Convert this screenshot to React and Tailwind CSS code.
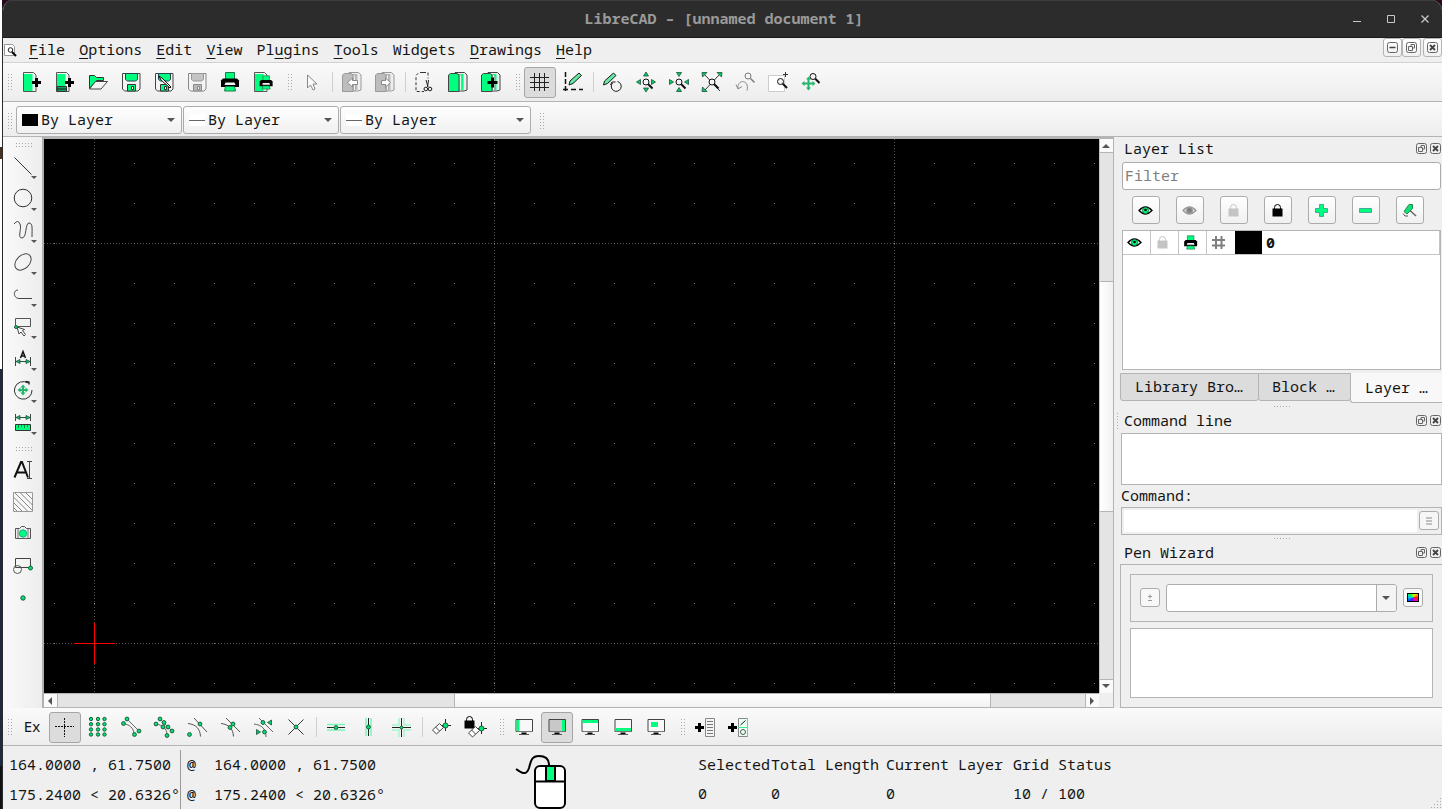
import clsx from 'clsx';

const G = '#00ff7f';
const K = '#1c1c1c';

const Svg = ({ children, w = 24, h = 24, className }) => (
  <svg width={w} height={h} viewBox={`0 0 ${w} ${h}`} fill="none" stroke={K} strokeWidth="1" className={clsx('shrink-0', className)}>
    {children}
  </svg>
);

const Dot = ({ x, y, r = 1.9 }) => <circle cx={x} cy={y} r={r} fill="#00e676" stroke="#1d5c3b" strokeWidth="1" />;
const Plus = ({ x, y, s = 4.5 }) => <path d={`M${x - s} ${y}h${s * 2}M${x} ${y - s}v${s * 2}`} stroke="#000" strokeWidth="3" />;

// magnifier used by all of the zoom actions, centred on its lens
const Lens = ({ x, y, c = '#111' }) => (
  <>
    <circle cx={x} cy={y} r="3" fill="#f4f4f4" stroke={c} />
    <path d={`M${x + 2.3} ${y + 2.3}l4.2 4.2`} stroke={c} strokeWidth="2" />
  </>
);

const Page = () => (
  <>
    <path d="M3.500 2.500h10l2.500 2.500v16.500h-12.500z" fill="#f4f4f4" stroke="#555" />
    <path d="M4 4h8.500v17h-8.500z" fill={G} stroke="none" />
  </>
);

const Floppy = ({ off }) => (
  <>
    <path d="M3.500 3.500h17.500v15.500l-2 2h-13.500l-2-2z" fill="#f4f4f4" stroke={off ? '#888' : '#444'} />
    <path d="M6.500 3.500h12v6l-2 1.500h-8l-2-1.500z" fill={off ? '#c4c4c4' : G} stroke={off ? '#999' : '#245'} />
    <path d="M8.500 21v-6.500h8v6.500z" fill={off ? '#b8b8b8' : G} stroke={off ? '#888' : '#333'} />
    <path d="M12.500 16.500h2v3h-2z" fill="#f4f4f4" stroke={off ? '#888' : '#333'} />
  </>
);

const Printer = ({ x = 0, y = 0, s = 1 }) => (
  <g transform={`translate(${x} ${y}) scale(${s})`}>
    <path d="M7.500 2.500h9v7h-9z" fill={G} stroke="#1b7a4a" />
    <path d="M5 8.500h14l2 2v6.500h-18v-6.500z" fill="#000" stroke="none" />
    <path d="M7.500 12.500h9l1 2.500h-11z" fill="#f4f4f4" stroke="none" />
    <path d="M7.500 16.500h9l1 4.500h-11z" fill={G} stroke="#1b7a4a" />
  </g>
);

const Blocks = ({ off }) => (
  <>
    <path d="M9 2.500h9.500l2.500 2.500v15l-3 1h-9z" fill="#eee" stroke={off ? '#999' : '#444'} />
    <path d="M12 4h5.500v16h-5.500z" fill={off ? '#bdbdbd' : G} stroke="none" />
    <path d="M13 4.500h1.500l1 2v14h-2z" fill="#eee" stroke="#999" strokeWidth=".6" />
    <path d="M2.500 5l2-1.500h6.500l2 1.500v16.500h-10.500z" fill={off ? '#bdbdbd' : G} stroke={off ? '#999' : '#444'} />
  </>
);

const Pencil = ({ x = 0, y = 0, c = K }) => (
  <path d={`M${x + 4} ${y + 13}l1-4 9-8 2.500 2.500-8.500 8z`} fill="#65e8a5" stroke={c} />
);

const Monitor = ({ children, fill = '#f8f8f8' }) => (
  <>
    <path d="M4 4.500h16.500v12h-16.500z" fill={fill} stroke="#444" />
    <g stroke="none" fill={G}>{children}</g>
    <path d="M4.500 16.500h15.500" stroke="#777" />
    <path d="M9.500 18.500h5" stroke="#000" strokeWidth="2" />
    <path d="M7 19.500h10" stroke="#555" />
  </>
);

const Move4 = ({ x = 12, y = 12, s = 5 }) => (
  <g stroke="#27b56d" fill="#27b56d">
    <path d={`M${x - s} ${y}h${s * 2}M${x} ${y - s}v${s * 2}`} strokeWidth="2" />
    <path d={`M${x - s - 2} ${y}l3-2.500v5zM${x + s + 2} ${y}l-3-2.500v5zM${x} ${y - s - 2}l-2.500 3h5zM${x} ${y + s + 2}l-2.500-3h5z`} stroke="none" />
  </g>
);

const Tri = ({ d }) => <path d={d} fill="#00c96a" stroke="#205038" strokeWidth=".8" />;

const Eraser = ({ x = 0, y = 0 }) => (
  <>
    <path d={`M${x + 10} ${y + 9.5}h12M${x + 16.5} ${y + 3}v12`} stroke="#222" />
    <Dot x={x + 16.5} y={y + 9.5} r={2.500} />
    <path d={`M${x + 3.5} ${y + 14}l7-6.500 4 4-7 6.500z`} fill="#fff" stroke="#444" />
    <path d={`M${x + 6.500} ${y + 11}l4 4`} stroke="#444" />
  </>
);

const Eye = ({ off }) => (
  <>
    <path d="M1 7.500q6.500-7 13 0q-6.500 7-13 0z" fill={off ? '#ddd' : '#fff'} stroke={off ? '#999' : '#000'} strokeWidth="1.300" />
    <circle cx="7.500" cy="7.500" r="3" fill={off ? '#888' : G} stroke={off ? '#999' : '#084'} />
    <circle cx="7.500" cy="7" r="1.300" fill={off ? '#777' : '#000'} stroke="none" />
  </>
);

const Lock = ({ x = 0, y = 0, c = '#000' }) => (
  <>
    <path d={`M${x + 4.5} ${y + 6}v-1.500a3 3 0 0 1 6 0v1.500`} stroke={c} />
    <path d={`M${x + 2.500} ${y + 5.500}h10v8h-10z`} fill={c} stroke="none" />
  </>
);

/* ---------- main toolbar icons ---------- */

const newIcon = <Svg><Page /><Plus x={16.5} y={12.5} /></Svg>;
const newTemplateIcon = <Svg><Page /><path d="M4 16.500h9.500v5h-9.500z" fill="#12a45c" stroke="#333" /><path d="M4 19h9" /><Plus x={16.500} y={12.500} /></Svg>;
const openIcon = (
  <Svg>
    <path d="M3.500 18.500v-13h5l2 2h7v3h-7z" fill={G} stroke="#333" />
    <path d="M3.500 19l6-7.500h12l-6.500 7.500z" fill="#f4f4f4" stroke="#444" />
  </Svg>
);
const saveAsIcon = <Svg><Floppy /><path d="M7 6l2 4 9 8 1-1-9-9z" fill="#f4f4f4" stroke="#111" /></Svg>;
const previewIcon = <Svg><Page /><Printer x={6.500} y={4} s={0.72} /></Svg>;
const pointerIcon = <Svg><path d="M7.500 5v13l3-3 2.500 5 2-1-2-5h4z" fill="#fafafa" stroke="#888" /></Svg>;
const undoIcon = <Svg><Blocks off /><path d="M7.500 12.500l5-4.500v2.500h5v4h-5v2.500z" fill="#fff" stroke="#888" /></Svg>;
const redoIcon = <Svg><Blocks off /><path d="M17.500 12.500l-5-4.500v2.500h-4v4h4v2.500z" fill="#fff" stroke="#888" /></Svg>;
const cutIcon = (
  <Svg>
    <path d="M10 2.500h-4l-3 3v16h8M10 2.500h5v6" strokeDasharray="3 2" stroke="#333" />
    <path d="M15.500 10l-1 7M13 10l2 7" stroke="#222" />
    <circle cx="12.800" cy="19" r="1.800" /><circle cx="17" cy="19" r="1.800" />
  </Svg>
);
const copyIcon = <Svg><Blocks /></Svg>;
const pasteIcon = <Svg><Blocks /><Plus x={13.500} y={12.500} s={5} /></Svg>;
const gridIcon = <Svg><path d="M6.500 3v18M11.500 3v18M16.500 3v18M2 7.500h19M2 12.500h19M2 17.500h19" stroke="#222" /></Svg>;
const draftIcon = (
  <Svg>
    <path d="M4.500 2v20" strokeDasharray="5 2" stroke="#111" strokeWidth="1.500" />
    <path d="M2 19.500h20" strokeDasharray="5 3" stroke="#111" strokeWidth="1.500" />
    <Pencil x={4} y={2} />
  </Svg>
);
const redrawIcon = (
  <Svg>
    <Pencil x={-1.500} y={2} />
    <path d="M11.500 13a5 5 0 1 0 5-1.500" />
    <path d="M9.500 15l1.500-3h3.500" />
  </Svg>
);
const zoomInIcon = (
  <Svg>
    <Tri d="M12 2l2.500 4h-5z" /><Tri d="M12 22l2.500-4h-5z" /><Tri d="M2.500 12l4-2.500v5z" /><Tri d="M21.500 12l-4-2.500v5z" />
    <Lens x={12} y={12} />
  </Svg>
);
const zoomOutIcon = (
  <Svg>
    <Tri d="M12 6.500l2.500-4h-5z" /><Tri d="M12 17.500l2.500 4h-5z" /><Tri d="M6.500 12l-4-2.500v5z" /><Tri d="M17.500 12l4-2.500v5z" />
    <Lens x={12} y={12} />
  </Svg>
);
const zoomAutoIcon = (
  <Svg>
    <path d="M4 4l16 17M20 4l-16 17" stroke="#333" />
    <Tri d="M2 2.500h5l-4.500 4.500z" /><Tri d="M22 2.500h-5l4.500 4.500z" /><Tri d="M2 21.500h5l-4.500-4.500z" />
    <Lens x={12} y={12} />
  </Svg>
);
const zoomPrevIcon = (
  <Svg>
    <circle cx="15" cy="6" r="3" stroke="#777" />
    <path d="M17.500 8.500l4 4" stroke="#777" strokeWidth="1.500" />
    <path d="M5 18.500c-1-10 12-9 9 2" stroke="#888" />
    <path d="M3 14.500l2 4.500 4-2.500" stroke="#888" />
  </Svg>
);
const zoomWindowIcon = (
  <Svg>
    <path d="M2.500 5.500h16v16h-16z" fill="#fff" stroke="#ccc" />
    <path d="M17 4.500h5M19.500 2v5" stroke="#333" />
    <Lens x={14.500} y={11.500} />
  </Svg>
);
const panIcon = <Svg><Move4 x={9.500} y={13.500} s={5} /><Lens x={14} y={6.500} /></Svg>;

/* ---------- left toolbar icons ---------- */

const drawTools = [
  <Svg><path d="M3.500 3.500l17 17" stroke="#333" /></Svg>,
  <Svg><circle cx="12" cy="12" r="8.800" stroke="#333" /></Svg>,
  <Svg><path d="M3 6q4-5 6 0c2 5-3 14 2 14s3-15 7-15c4 0 3 6 3 14" stroke="#444" /></Svg>,
  <Svg><ellipse cx="12" cy="12" rx="9.500" ry="6.500" transform="rotate(-45 12 12)" stroke="#444" /></Svg>,
  <Svg><path d="M7 8c-5 0-5 8 1 8.500h13" stroke="#444" /></Svg>,
  <Svg><path d="M4.500 4.500h15v8h-15z" stroke="#555" /><path d="M6 13l2 7 2-2 3 4 1.500-1.500-3-4 2-1z" fill="#fff" stroke="#444" /><Dot x={5} y={13} r={1.500} /></Svg>,
  (
    <Svg>
      <path d="M4.500 11v9M19.500 11v9M5 15.500h14" stroke="#444" />
      <Tri d="M5 15.500l4-2v4z" /><Tri d="M19 15.500l-4-2v4z" />
      <path d="M9.500 12l2.500-6.500 2.500 6.500M10.500 10h3" stroke="#111" strokeWidth="1.500" />
    </Svg>
  ),
  <Svg><path d="M17 5a8.800 8.800 0 1 0 4 7" stroke="#333" /><path d="M14.500 3.500l3.500 .5v2.500" stroke="#111" strokeWidth="1.300" /><Move4 x={12} y={12} s={3.500} /></Svg>,
  (
    <Svg>
      <path d="M4.500 4v7M19.500 4v7M5 7.500h14" stroke="#444" />
      <Tri d="M5 7.500l4-2v4z" /><Tri d="M19 7.500l-4-2v4z" />
      <path d="M4.500 14.500h15v6h-15z" fill={G} stroke="#333" />
      <path d="M7.500 15v3M10.500 15v2M13.500 15v3M16.500 15v2" stroke="#084" />
    </Svg>
  ),
];

const extraTools = [
  <Svg><path d="M3.500 19.500l6.500-15.500h1l6 15.500M5.500 14.500h9" stroke="#111" strokeWidth="2" /><path d="M16 3.500h5M16 20.500h5M18.500 3.500v17" stroke="#444" /></Svg>,
  <Svg><path d="M2.500 2.500h19v19h-19z" fill="#f8f8f8" stroke="#999" /><path d="M3 13l8 8M3 7.500l13.500 13.500M4 3l17.500 17.500M9.500 3l12 12M15 3l6.500 6.500M3 18l3 3" stroke="#777" strokeWidth=".9" /></Svg>,
  <Svg><path d="M4.500 6.500h4l2-2h3l2 2h4v10h-15z" fill="#eee" stroke="#555" /><path d="M7 7v9M17 7v9" stroke="#777" /><circle cx="12" cy="11.500" r="3.700" fill={G} stroke="#2a8" /></Svg>,
  <Svg><path d="M4.500 4.500h15v9h-15z" stroke="#444" /><circle cx="6.500" cy="15.500" r="4" stroke="#555" /><Dot x={19.500} y={14} r={2} /></Svg>,
  <Svg><Dot x={12} y={12} r={2.200} /></Svg>,
];

/* ---------- snap toolbar icons ---------- */

const freeSnapIcon = <Svg><path d="M11.500 3v19M2 11.500h19" stroke="#111" strokeDasharray="2 1" /></Svg>;
const snapGridIcon = <Svg>{[5, 12, 18.500].map(x => [4, 9.200, 14.500, 19.500].map(y => <Dot key={`${x}-${y}`} x={x} y={y} r={1.700} />))}</Svg>;
const snapEndIcon = <Svg><path d="M8 4l12 12M4 8.500c6 1 11 4 11 11" stroke="#666" /><Dot x={8} y={4} /><Dot x={4.500} y={8.500} /><Dot x={20} y={16} /><Dot x={15.500} y={19.500} /></Svg>;
const snapEntityIcon = (
  <Svg>
    <path d="M8 4l12 12M4 9c6 1 11 4 11 11" stroke="#666" />
    <Dot x={8} y={4} /><Dot x={4} y={9} /><Dot x={20} y={16} /><Dot x={15} y={20.500} /><Dot x={12} y={7.500} /><Dot x={16} y={12} /><Dot x={11} y={12} />
  </Svg>
);
const snapCenterIcon = <Svg><path d="M9 3l13 14M3 8.500c8 1 12 5 12.500 13" stroke="#555" /><Dot x={15} y={9} /><Dot x={4.500} y={19.500} /></Svg>;
const snapMiddleIcon = <Svg><path d="M8 3l14 14M3 8.500c8 1 12 5 12.500 13" stroke="#555" /><Dot x={15} y={9} /><Dot x={12} y={12.500} /></Svg>;
const snapDistIcon = <Svg><path d="M8 3l14 14M3 9c8 1 12 5 12 13" stroke="#666" /><Dot x={12} y={7.500} /><Dot x={13.500} y={17} /><Tri d="M16.500 7.500l4-2.500v5z" /><Tri d="M9.500 17l-4-2.500v5z" /></Svg>;
const snapIntersectIcon = <Svg><path d="M4.500 4.500l15 15M19.500 4.500l-15 15" stroke="#333" /><Dot x={12} y={12} /></Svg>;
const restrictHIcon = <Svg><path d="M3 9.500h18M3 15h18" stroke="#7df5b8" strokeWidth="1.500" /><path d="M3 12.500h18" stroke="#222" /><Dot x={12} y={12.500} /></Svg>;
const restrictVIcon = <Svg><path d="M9 3v18M14 3v18" stroke="#7df5b8" strokeWidth="1.500" /><path d="M11.500 3v18" stroke="#222" /><Dot x={11.500} y={12} /></Svg>;
const restrictOIcon = <Svg><path d="M9 3v7h-7M14 3v7h7M9 22v-7h-7M14 22v-7h7" stroke="#a5f5cb" strokeWidth="1.500" /><path d="M11.500 3v19M2 12.500h19" stroke="#222" /><Dot x={11.500} y={12.500} r={1.500} /></Svg>;
const relZeroIcon = <Svg><Eraser x={-1} y={1} /></Svg>;
const lockZeroIcon = <Svg><Lock x={-1} y={0} /><Eraser x={2} y={4} /></Svg>;
const addMenuIcon = <Svg><Plus x={6.500} y={12.500} s={4.500} /><path d="M12.500 3.500h9v18h-9z" fill="#f4f4f4" stroke="#888" /><path d="M14 6.500h6M14 9.500h6M14 12.500h6M14 15.500h6M14 18.500h6" stroke="#777" /></Svg>;
const addBarIcon = <Svg><Plus x={6.500} y={12.500} s={4.500} /><path d="M12.500 3.500h9v18h-9z" fill="#e8fff2" stroke="#888" /><path d="M12 12.500h10M21.500 3v18" stroke="#3dea90" /><path d="M14.500 10l5-4.500" /><circle cx="17" cy="17" r="2.500" stroke="#555" /></Svg>;

/* ---------- small shared parts ---------- */

function Btn({ icon, on }) {
  return (
    <button className={clsx('mr-px flex h-[31px] w-8 shrink-0 items-start justify-center rounded-[3px]', on ? 'border border-[#a5a5a5] bg-[#dcdcdc] pt-[2px]' : 'pt-[3px]')}>
      {icon}
    </button>
  );
}

const Handle = ({ first }) => (
  <svg width={first ? 13 : 16} height="18" className="mt-[6px] shrink-0">
    {[0, 1, 2, 3, 4, 5].map(i => [0, 3].map(j => (
      <rect key={`${i}-${j}`} x={(first ? 5 : 8) + j} y={1 + i * 3} width="1" height="1" fill="#aaa" />
    )))}
  </svg>
);

const DotRow = ({ rows = 1 }) => (
  <svg width="18" height={rows * 3} className="shrink-0">
    {[0, 1, 2, 3, 4, 5].map(i => Array.from({ length: rows }, (_, j) => (
      <rect key={`${i}-${j}`} x={1 + i * 3} y={j * 3} width="1" height="1" fill="#aaa" />
    )))}
  </svg>
);

const Sep = () => <div className="mt-[5px] mr-[3px] ml-[3px] h-5 w-px shrink-0 bg-[#cfcfcf]" />;

const Arrow = ({ dir = 'down' }) => (
  <svg width="8" height="8" viewBox="0 0 8 8" className={clsx('shrink-0', dir === 'up' && 'rotate-180', dir === 'left' && 'rotate-90', dir === 'right' && '-rotate-90')}>
    <path d="M0 2h8l-4 4z" fill="#555" />
  </svg>
);

function Combo({ label, className, swatch }) {
  return (
    <div className={clsx('flex h-7 shrink-0 items-center rounded-[3px] border border-[#acacac] bg-linear-to-b from-white to-[#f0f0f0] pr-[6px] pl-[5px]', className)}>
      {swatch ? <span className="h-3 w-4 bg-black" /> : <span className="flex h-3 w-4 items-center bg-white"><span className="h-px w-4 bg-[#666]" /></span>}
      <span className="ml-[3px] flex-1 pb-[2px] whitespace-pre">{label}</span>
      <Arrow />
    </div>
  );
}

const RestoreGlyph = () => (
  <svg width="11" height="11" fill="none" stroke="#666" strokeWidth="1" className="shrink-0">
    <rect x=".5" y=".5" width="10" height="10" rx="2" />
    <path d="M5 4.500v-2h3.500v3.500h-2M2.500 4.500h4v4h-4z" />
  </svg>
);
const CloseGlyph = () => (
  <svg width="11" height="11" fill="none" stroke="#666" className="shrink-0">
    <rect x=".5" y=".5" width="10" height="10" rx="2" />
    <path d="M3 3l5 5M8 3l-5 5" stroke="#444" strokeWidth="1.800" />
  </svg>
);
const MinGlyph = () => (
  <svg width="11" height="11" fill="none" stroke="#666" className="shrink-0">
    <rect x=".5" y=".5" width="10" height="10" rx="2" />
    <path d="M2.500 5.500h6" stroke="#444" strokeWidth="1.500" />
  </svg>
);

const DockTitle = ({ children, grip, className }) => (
  <div className={clsx('flex items-center pr-px', className)}>
    <svg width="10" height="18" className="shrink-0">
      {grip && [0, 1, 2, 3, 4, 5].map(i => <rect key={i} x="3" y={2 + i * 3} width="1" height="1" fill="#aaa" />)}
    </svg>
    <span className="flex-1 whitespace-pre">{children}</span>
    <RestoreGlyph />
    <span className="w-[3px]" />
    <CloseGlyph />
  </div>
);

const MdiBtn = ({ children, className }) => (
  <button className={clsx('flex h-[19px] w-[19px] items-center justify-center rounded-[3px] border border-[#b4b4b4] bg-linear-to-b from-white to-[#f0f0f0]', className)}>
    {children}
  </button>
);

const menus = [['', 'F', 'ile'], ['', 'O', 'ptions'], ['', 'E', 'dit'], ['', 'V', 'iew'], ['Pl', 'u', 'gins'], ['', 'T', 'ools'], ['Widgets', '', ''], ['', 'D', 'rawings'], ['', 'H', 'elp']];

const layerActions = [
  <Svg w={15} h={15}><Eye /></Svg>,
  <Svg w={15} h={15}><Eye off /></Svg>,
  <Svg w={15} h={15}><Lock c="#c4c4c4" /></Svg>,
  <Svg w={15} h={15}><Lock /></Svg>,
  <Svg w={15} h={15}><path d="M5.500 1.500h4v4h4v4h-4v4h-4v-4h-4v-4h4z" fill={G} stroke="#4a9" /></Svg>,
  <Svg w={15} h={15}><path d="M1.500 5.500h12v4h-12z" fill={G} stroke="#4a9" /></Svg>,
  <Svg w={15} h={15}><path d="M2 8.500l5-7h3.500v4l-5.500 5.500z" fill="#10e07a" stroke="#284" /><path d="M8 7.500l6 5.500" stroke="#666" strokeWidth="1.500" /><path d="M1 10.500l2 2.500h3" stroke="#555" /></Svg>,
];

const status = [['Selected', '0', 'w-[73px]'], ['Total Length', '0', 'w-[115px]'], ['Current Layer', '0', 'w-[127px]'], ['Grid Status', '10 / 100', 'w-[110px]']];

// scroll area starts at 44,139 on screen; origin of the drawing is at 50,504 inside it
function Drawing() {
  const dots = [];
  for (let y = 24; y < 554; y += 40) for (let x = 10; x < 1055; x += 40) dots.push(`M${x} ${y}h1v1h-1z`);
  return (
    <svg width="1055" height="554" className="shrink-0 bg-black" shapeRendering="crispEdges">
      <g stroke="#505050" strokeWidth="1" strokeDasharray="1 2">
        <path d="M50.500 0v554M450.500 0v554M850.500 0v554" />
        <path d="M0 104.500h1055M0 504.500h1055" />
      </g>
      <path d={dots.join('')} fill="#858585" />
      <path d="M30 504.500h41M50.500 484v41" stroke="#f00" />
    </svg>
  );
}

function ToolBar({ children, className }) {
  return (
    <div className={clsx('flex shrink-0 items-start border-b border-[#b4b4b4] bg-linear-to-b from-[#fafafa] to-[#ededed]', className)}>
      {children}
    </div>
  );
}

function LayerDock() {
  return (
    <>
      <DockTitle className="h-[25px] pb-[3px]">Layer List</DockTitle>
      <div className="ml-2 flex h-7 w-[319px] items-center rounded-[3px] border border-[#acacac] bg-white pb-[2px] pl-[2px] text-[#808080]">Filter</div>
      <div className="mt-[6px] flex gap-4 pl-[18px]">
        {layerActions.map((icon, i) => (
          <button key={i} className="flex h-7 w-7 items-center justify-center rounded-[3px] border border-[#acacac] bg-linear-to-b from-white to-[#f0f0f0] pr-px">{icon}</button>
        ))}
      </div>
      <div className="mt-[6px] ml-2 h-[140px] w-[319px] border border-[#b4b4b4] bg-white">
        <div className="flex h-6 items-center border-r border-b border-[#c4c4c4]">
          <div className="flex h-full w-7 items-center justify-center border-r border-[#c4c4c4] pr-[5px]"><Svg w={15} h={15}><Eye /></Svg></div>
          <div className="flex h-full w-7 items-center justify-center border-r border-[#c4c4c4] pr-[5px]"><Svg w={15} h={15}><Lock c="#c4c4c4" /></Svg></div>
          <div className="flex h-full w-7 items-center justify-center border-r border-[#c4c4c4] pr-[5px]"><Svg w={15} h={15}><Printer x={-1} y={-1} s={0.72} /></Svg></div>
          <div className="flex h-full w-7 items-center justify-center pr-[6px]">
            <Svg w={15} h={15}><path d="M5 1v13M10.500 1v13M1 5h13M1 10.500h13" stroke="#808080" strokeWidth="2" /></Svg>
          </div>
          <div className="h-[23px] w-[27px] bg-black" />
          <span className="ml-1 pb-[2px] font-bold">0</span>
        </div>
      </div>
      <div className="mt-[3px] flex h-[30px] pl-[6px]">
        <div className="flex h-7 w-[139px] items-center rounded-b-[3px] border border-[#b4b4b4] bg-[#dcdcdc] pb-[2px] pl-[14px]">Library Bro…</div>
        <div className="-ml-px flex h-7 w-[93px] items-center rounded-b-[3px] border border-[#b4b4b4] bg-[#dcdcdc] pb-[2px] pl-[13px] whitespace-pre">Block …</div>
        <div className="-ml-px flex h-[30px] flex-1 items-center rounded-bl-[3px] border-b border-l border-[#b4b4b4] bg-[#f8f8f8] pb-[2px] pl-[14px] whitespace-pre">Layer …</div>
      </div>
      <div className="flex h-[7px] items-end justify-center pb-px pl-2"><DotRow /></div>
    </>
  );
}

function CommandDock() {
  return (
    <>
      <DockTitle grip className="mt-px h-[22px] pb-1">Command line</DockTitle>
      <div className="ml-[7px] h-[52px] w-[321px] border border-[#b4b4b4] bg-white" />
      <div className="flex h-[22px] items-center pb-[2px] pl-[7px]">Command:</div>
      <div className="ml-[7px] flex h-7 w-[321px] items-center border border-[#b4b4b4] pl-[2px]">
        <div className="h-[22px] w-[293px] bg-white" />
        <button className="mb-px ml-[2px] flex h-[19px] w-5 flex-col items-center justify-center gap-px rounded-[3px] border border-[#acacac] bg-[#f6f6f6]">
          <span className="h-[2px] w-[6px] bg-[#c0c0c0]" />
          <span className="h-[2px] w-[6px] bg-[#c0c0c0]" />
          <span className="h-[2px] w-[6px] bg-[#c0c0c0]" />
        </button>
      </div>
      <div className="flex h-[7px] items-end justify-center pb-px pl-2"><DotRow /></div>
    </>
  );
}

function PenDock() {
  return (
    <>
      <DockTitle className="h-[22px] pb-[2px]">Pen Wizard</DockTitle>
      <div className="ml-[6px] flex-1 border-y border-l border-[#b4b4b4] pt-[9px] pl-[9px]">
        <div className="flex h-12 w-[303px] items-center border border-[#b4b4b4] pl-[9px]">
          <button className="mb-px flex h-[19px] w-5 items-center justify-center rounded-[3px] border border-[#acacac] bg-[#f8f8f8]">
            <Svg w={6} h={8}><path d="M1 2.500h4M3 .5v4M1 6.500h4" stroke="#999" /></Svg>
          </button>
          <div className="ml-[6px] flex h-7 w-[231px] rounded-[3px] border border-[#acacac] bg-white">
            <div className="flex-1" />
            <div className="flex w-5 items-center justify-center rounded-r-[2px] border-l border-[#acacac] bg-[#f4f4f4] pr-[2px]"><Arrow /></div>
          </div>
          <button className="mb-px ml-[6px] flex h-[19px] w-5 items-center justify-center rounded-[3px] border border-[#acacac] bg-[#f8f8f8]">
            <span className="h-[9px] w-3 border border-black bg-[conic-gradient(from_45deg,#ffd000,#ff2000,#ff00a0,#a000ff,#0040ff,#00c0ff,#00ff40,#a0ff00,#ffd000)]" />
          </button>
        </div>
        <div className="mt-[6px] h-[70px] w-[303px] border border-[#b4b4b4] bg-white" />
      </div>
    </>
  );
}

export default function App() {
  return (
    <div className="flex h-[809px] w-[1442px] overflow-hidden bg-[#2a0a20] font-['Noto_Sans_Mono','Source_Code_Pro','Liberation_Mono',monospace] text-[15px] leading-5 text-[#141414]">
      {/* sliver of the window behind */}
      <div className="flex w-[2px] shrink-0 flex-col bg-white">
        <div className="h-[147px]" />
        <div className="h-3 bg-[#4a3020]" />
        <div className="h-[210px]" />
        <div className="h-[397px] bg-[#1c2b40]" />
        <div className="flex-1 bg-[#111]" />
      </div>

      <div className="flex min-w-0 flex-1 flex-col overflow-hidden rounded-t-[11px] border-l border-[#2a2a2a] bg-[#efefef]">
        <header className="flex h-[38px] shrink-0 items-center border-t border-b border-t-[#3c3c3c] border-b-[#1a1a1a] bg-[#2c2c2c] text-[#9a9a9a]">
          <div className="w-[95px]" />
          <h1 className="flex-1 pb-[2px] pl-[4px] text-center font-bold whitespace-pre">LibreCAD – [unnamed document 1]</h1>
          <svg width="96" height="36" fill="none" stroke="#c8c8c8">
            <path d="M7 20.500h8" /><path d="M41.500 14.500h7v7h-7z" /><path d="M75.500 14.500l7 7M82.500 14.500l-7 7" strokeWidth="1.300" />
          </svg>
        </header>

        <nav className="flex h-[25px] shrink-0 items-center border-b border-[#d2d2d2]">
          <svg width="14" height="14" fill="none" className="mr-3 shrink-0">
            <path d="M1.500 1.500h8l2 2v9h-10z" fill="#fff" stroke="#999" />
            <circle cx="7.500" cy="7" r="2.300" stroke="#222" />
            <path d="M9 9l4 4" stroke="#000" strokeWidth="2" />
          </svg>
          <div className="flex flex-1 gap-[14.1px] pb-[2px]">
            {menus.map(([a, u, b]) => (
              <span key={a + u + b}>{a}<span className="underline decoration-1 underline-offset-[3px]">{u}</span>{b}</span>
            ))}
          </div>
          <div className="mb-[5px] flex">
            <MdiBtn><MinGlyph /></MdiBtn>
            <MdiBtn><RestoreGlyph /></MdiBtn>
            <MdiBtn className="ml-[2px]"><CloseGlyph /></MdiBtn>
          </div>
        </nav>

        <ToolBar className="h-[39px] pt-1">
          <Handle first />
          <Btn icon={newIcon} /><Btn icon={newTemplateIcon} /><Btn icon={openIcon} />
          <Btn icon={<Svg><Floppy /></Svg>} /><Btn icon={saveAsIcon} /><Btn icon={<Svg><Floppy off /></Svg>} />
          <Btn icon={<Svg><Printer /></Svg>} /><Btn icon={previewIcon} />
          <Handle />
          <Btn icon={pointerIcon} />
          <Sep />
          <Btn icon={undoIcon} /><Btn icon={redoIcon} />
          <Sep />
          <Btn icon={cutIcon} /><Btn icon={copyIcon} /><Btn icon={pasteIcon} />
          <Handle />
          <Btn icon={gridIcon} on /><Btn icon={draftIcon} />
          <Sep />
          <Btn icon={redrawIcon} /><Btn icon={zoomInIcon} /><Btn icon={zoomOutIcon} /><Btn icon={zoomAutoIcon} />
          <Btn icon={zoomPrevIcon} /><Btn icon={zoomWindowIcon} /><Btn icon={panIcon} />
        </ToolBar>

        <ToolBar className="h-[35px] pt-1">
          <Handle first />
          <Combo label="By Layer" className="w-[166px]" swatch />
          <Combo label="By Layer" className="ml-px w-[156px]" />
          <Combo label="By Layer" className="ml-px w-[191px]" />
          <div className="w-px" />
          <Handle />
        </ToolBar>

        <main className="flex h-[571px] shrink-0">
          <aside className="flex w-[41px] shrink-0 flex-col border-r-2 border-[#b0b0b0] bg-linear-to-r from-[#fafafa] to-[#ededed]">
            <div className="h-[14px] pt-[6px] pl-3"><DotRow rows={2} /></div>
            {drawTools.map((icon, i) => (
              <button key={i} className="flex h-8 shrink-0 pt-[3px] pl-2">
                {icon}
                <svg width="6" height="4" className="mt-[22px] -ml-1 shrink-0"><path d="M0 0h6l-3 3z" fill="#555" /></svg>
              </button>
            ))}
            <div className="h-[15px] pt-2 pl-3"><DotRow rows={2} /></div>
            {extraTools.map((icon, i) => (
              <button key={i} className="flex h-8 shrink-0 pt-1 pl-2">{icon}</button>
            ))}
          </aside>

          <section className="flex w-[1070px] shrink-0 flex-col border-t-2 border-r border-b border-[#b4b4b4]">
            <div className="flex">
              <Drawing />
              <div className="flex w-[14px] flex-col border-l border-[#c4c4c4] bg-[#e4e4e4]">
                <div className="flex h-[14px] items-center justify-center border-b border-[#b4b4b4] bg-[#fafafa] pr-px"><Arrow dir="up" /></div>
                <div className="h-32" />
                <div className="h-[231px] border-y border-[#b4b4b4] bg-linear-to-r from-white to-[#f2f2f2]" />
                <div className="flex-1" />
                <div className="flex h-[14px] items-center justify-center border-t border-[#b4b4b4] bg-[#fafafa] pr-px pb-[2px]"><Arrow /></div>
              </div>
            </div>
            <div className="flex h-[14px] w-[1055px] border-t border-[#b4b4b4] bg-[#e4e4e4]">
              <div className="flex w-[14px] items-center justify-center border-r border-[#b4b4b4] bg-[#fafafa] pr-px"><Arrow dir="left" /></div>
              <div className="w-[396px]" />
              <div className="w-[537px] border-x border-[#b4b4b4] bg-linear-to-b from-white to-[#f2f2f2]" />
              <div className="flex-1" />
              <div className="flex w-[14px] items-center justify-center border-l border-[#b4b4b4] bg-[#fafafa] pr-[2px]"><Arrow dir="right" /></div>
            </div>
          </section>

          <aside className="flex min-w-0 flex-1 flex-col">
            <LayerDock />
            <CommandDock />
            <PenDock />
          </aside>
        </main>

        <ToolBar className="h-[38px] pt-1">
          <Handle first />
          <Btn icon={<span className="pt-px font-['Noto_Sans'] text-[15px] leading-5">Ex</span>} />
          <Btn icon={freeSnapIcon} on />
          <Btn icon={snapGridIcon} /><Btn icon={snapEndIcon} /><Btn icon={snapEntityIcon} /><Btn icon={snapCenterIcon} />
          <Btn icon={snapMiddleIcon} /><Btn icon={snapDistIcon} /><Btn icon={snapIntersectIcon} />
          <Sep />
          <Btn icon={restrictHIcon} /><Btn icon={restrictVIcon} /><Btn icon={restrictOIcon} />
          <Sep />
          <Btn icon={relZeroIcon} /><Btn icon={lockZeroIcon} />
          <Handle />
          <Btn icon={<Svg><Monitor><path d="M4.500 5h3v11h-3z" /></Monitor></Svg>} />
          <Btn icon={<Svg><Monitor fill="#c8c8c8"><path d="M17 5h3v11h-3z" /></Monitor></Svg>} on />
          <Btn icon={<Svg><Monitor><path d="M4.500 5h15.500v3h-15.500z" /></Monitor></Svg>} />
          <Btn icon={<Svg><Monitor><path d="M4.500 13h15.500v3h-15.500z" /></Monitor></Svg>} />
          <Btn icon={<Svg><Monitor><path d="M7 7h7v5h-7z" /></Monitor></Svg>} />
          <Handle />
          <Btn icon={addMenuIcon} /><Btn icon={addBarIcon} />
        </ToolBar>

        <footer className="flex min-h-0 flex-1 whitespace-pre">
          <div className="mt-1 w-[178px] border-r border-[#999] pt-1 pl-[6px]">
            <p className="h-[30px]">164.0000 , 61.7500</p>
            <p>175.2400 &lt; 20.6326°</p>
          </div>
          <div className="mt-1 w-[331px] pt-1 pl-[6px]">
            <p className="h-[30px]">@  164.0000 , 61.7500</p>
            <p>@  175.2400 &lt; 20.6326°</p>
          </div>
          <svg width="56" height="63" fill="none" stroke="#000" strokeWidth="2" className="shrink-0">
            <path d="M4 23c5 3 10 8 13-1c2-8 3-12 10-12c6 0 10 3 10 9" />
            <rect x="23" y="20" width="30" height="42" rx="5" fill="#fff" />
            <path d="M34 20v15h9v-15z" fill={G} />
            <path d="M23 35.500h30" />
          </svg>
          <div className="flex flex-1 pt-2 pl-[130px]">
            {status.map(([label, value, w]) => (
              <div key={label} className={w}>
                <p className="h-[29px]">{label}</p>
                <p>{value}</p>
              </div>
            ))}
          </div>
          <svg width="12" height="12" className="shrink-0 self-end" fill="#aaa">
            {[0, 1, 2, 3].map(r => Array.from({ length: r + 1 }, (_, c) => (
              <rect key={`${r}-${c}`} x={10 - c * 3} y={1 + r * 3} width="1" height="1" />
            )))}
          </svg>
        </footer>
      </div>
    </div>
  );
}
